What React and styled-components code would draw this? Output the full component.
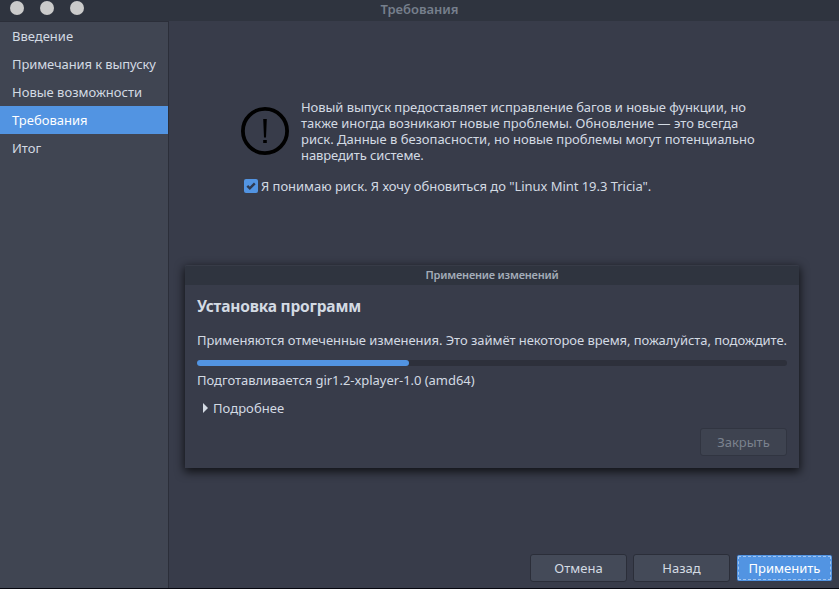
import React, { useState } from "react";
import styled, { createGlobalStyle } from "styled-components";

const GlobalStyle = createGlobalStyle`
  * {
    box-sizing: border-box;
  }

  body {
    margin: 0;
    background: #06070f;
    color: #d3dae3;
    font: 13px/16px "Noto Sans", "Open Sans", sans-serif;
  }
`;

const Window = styled.div`
  display: flex;
  flex-direction: column;
  width: 839px;
  height: 588px;
  background: #383c4a;
  overflow: hidden;
`;

const TitleBar = styled.header`
  display: grid;
  grid-template-columns: 1fr auto 1fr;
  height: 21px;
  flex: none;
  padding: 1px 10px 0;
  background: #2f343f;
`;

const WindowControls = styled.div`
  display: flex;
  gap: 16px;
`;

const WindowControl = styled.span`
  width: 14px;
  height: 14px;
  border-radius: 50%;
  background: #cbcbcb;
`;

// spacing is in px and is added after every letter
const Text = styled.span`
  white-space: pre;
  letter-spacing: ${props => props.$spacing || 0}px;
`;

const Title = styled(Text)`
  color: #767f8c;
  font-weight: 600;
`;

const Body = styled.div`
  display: flex;
  flex: 1;
`;

const Sidebar = styled.nav`
  width: 169px;
  flex: none;
  border-top: 1px solid #2b2e39;
  border-right: 1px solid #2b2e39;
  background: #404552;
`;

const SidebarItem = styled.div`
  display: flex;
  align-items: center;
  height: 28px;
  padding-left: 12px;
  cursor: pointer;

  ${props => props.$active && `
    background: #5294e2;
    color: #fff;
  `}
`;

const Main = styled.main`
  display: flex;
  flex-direction: column;
  flex: 1;
  padding: 78px 6px 6px 16px;
`;

const Warning = styled.section`
  display: flex;
  gap: 12px;
  margin-left: 56px;
  height: 64px;

  svg {
    flex: none;
    margin-top: 8px;
  }
`;

const WarningText = styled.div`
  display: flex;
  flex-direction: column;
`;

const Agreement = styled.div`
  display: flex;
  align-items: center;
  gap: 3px;
  height: 16px;
  margin: 15px 0 0 59px;
  cursor: pointer;
`;

const CheckBox = styled.span`
  display: flex;
  width: 14px;
  height: 14px;
  border-radius: 2px;
  background: ${props => props.$checked ? "#5294e2" : "#404552"};
`;

const Dialog = styled.section`
  width: 614px;
  height: 203px;
  margin-top: 71px;
  border-radius: 2px 2px 0 0;
  background: #383c4a;
  box-shadow: 0 3px 10px 1px rgba(0, 0, 0, 0.7);
`;

const DialogTitle = styled.div`
  height: 20px;
  padding-top: 1px;
  border-top: 1px solid #373b47;
  border-radius: 2px 2px 0 0;
  background: #2f343f;
  color: #a4adb9;
  font-size: 11px;
  font-weight: 600;
  text-align: center;
`;

const DialogBody = styled.div`
  display: flex;
  flex-direction: column;
  height: 183px;
  padding: 12px;
`;

const Heading = styled.h1`
  margin: 0 0 16px;
  font-size: 15.5px;
  line-height: 19px;
  font-weight: 700;
`;

const Track = styled.div`
  height: 6px;
  margin: 12px 0 6px;
  border-radius: 3px;
  background: #2d303b;
`;

const Bar = styled.div`
  height: 6px;
  border-radius: 3px;
  background: #5294e2;
`;

const Details = styled.div`
  display: flex;
  align-items: center;
  gap: 5px;
  margin: 12px 0 0 6px;
`;

const Actions = styled.footer`
  display: flex;
  justify-content: flex-end;
  gap: 6px;
  margin-top: auto;
`;

const Button = styled.button`
  width: ${props => props.$width || 97}px;
  height: 28px;
  padding: 0;
  border: 1px solid #2b2e39;
  border-radius: 3px;
  background: #444a58;
  color: #d3dae3;
  font: inherit;

  &:disabled {
    border-color: #313541;
    background: #3e4350;
    color: #7b828e;
  }

  ${props => props.$primary && `
    border-color: #343a4c;
    background: #5294e2;
    color: #fff;
    outline: 1px dashed #a0c5f0;
    outline-offset: -3px;
  `}
`;

const pages = [
  { label: "Введение", spacing: 0 },
  { label: "Примечания к выпуску", spacing: -0.1 },
  { label: "Новые возможности", spacing: 0 },
  { label: "Требования", spacing: 0 },
  { label: "Итог", spacing: 0 },
];

const warningLines = [
  { text: "Новый выпуск предоставляет исправление багов и новые функции, но", spacing: -0.055 },
  { text: "также иногда возникают новые проблемы. Обновление — это всегда", spacing: -0.01 },
  { text: "риск. Данные в безопасности, но новые проблемы могут потенциально", spacing: -0.02 },
  { text: "навредить системе.", spacing: -0.1 },
];

function WarningIcon() {
  return (
    <svg width="48" height="48" viewBox="0 0 48 48">
      <circle cx="24" cy="24" r="22.1" fill="none" stroke="#000" strokeWidth="3.8" />
      <path d="M22.2 12h3.6l-.8 18.5h-2zM22.2 33h3.6v3h-3.6z" />
    </svg>
  );
}

function ProgressDialog({ progress }) {
  return (
    <Dialog>
      <DialogTitle><Text $spacing={-0.2}>Применение изменений</Text></DialogTitle>
      <DialogBody>
        <Heading><Text $spacing={-0.2}>Установка программ</Text></Heading>
        <Text $spacing={-0.05}>Применяются отмеченные изменения. Это займёт некоторое время, пожалуйста, подождите.</Text>
        <Track><Bar style={{ width: `${progress}%` }} /></Track>
        <Text $spacing={-0.04}>Подготавливается gir1.2-xplayer-1.0 (amd64)</Text>
        <Details>
          <svg width="5" height="10" viewBox="0 0 5 10"><path d="M0 0l5 5-5 5z" fill="#d3dae3" /></svg>
          <Text $spacing={0.05}>Подробнее</Text>
        </Details>
        <Actions>
          <Button $width={87} disabled><Text>Закрыть</Text></Button>
        </Actions>
      </DialogBody>
    </Dialog>
  );
}

function App() {
  const [ page, setPage ] = useState(3);
  const [ agreed, setAgreed ] = useState(true);
  return (
    <Window>
      <GlobalStyle />
      <TitleBar>
        <WindowControls>
          <WindowControl />
          <WindowControl />
          <WindowControl />
        </WindowControls>
        <Title>Требования</Title>
      </TitleBar>
      <Body>
        <Sidebar>
          {pages.map(({ label, spacing }, i) => (
            <SidebarItem key={label} $active={i === page} onClick={() => setPage(i)}>
              <Text $spacing={spacing}>{ label }</Text>
            </SidebarItem>
          ))}
        </Sidebar>
        <Main>
          <Warning>
            <WarningIcon />
            <WarningText>
              {warningLines.map(({ text, spacing }) => (
                <Text key={text} $spacing={spacing}>{ text }</Text>
              ))}
            </WarningText>
          </Warning>
          <Agreement onClick={() => setAgreed(!agreed)}>
            <CheckBox $checked={agreed}>
              {agreed && (
                <svg width="14" height="14" viewBox="0 0 14 14">
                  <path d="M3.3 6.8l2.5 2.5 5-5" fill="none" stroke="#2f3a50" strokeWidth="2.4" />
                </svg>
              )}
            </CheckBox>
            <Text $spacing={-0.04}>Я понимаю риск. Я хочу обновиться до "Linux Mint 19.3 Tricia".</Text>
          </Agreement>
          <ProgressDialog progress={35.9} />
          <Actions>
            <Button><Text>Отмена</Text></Button>
            <Button><Text>Назад</Text></Button>
            <Button $primary><Text>Применить</Text></Button>
          </Actions>
        </Main>
      </Body>
    </Window>
  );
}

export default App;
